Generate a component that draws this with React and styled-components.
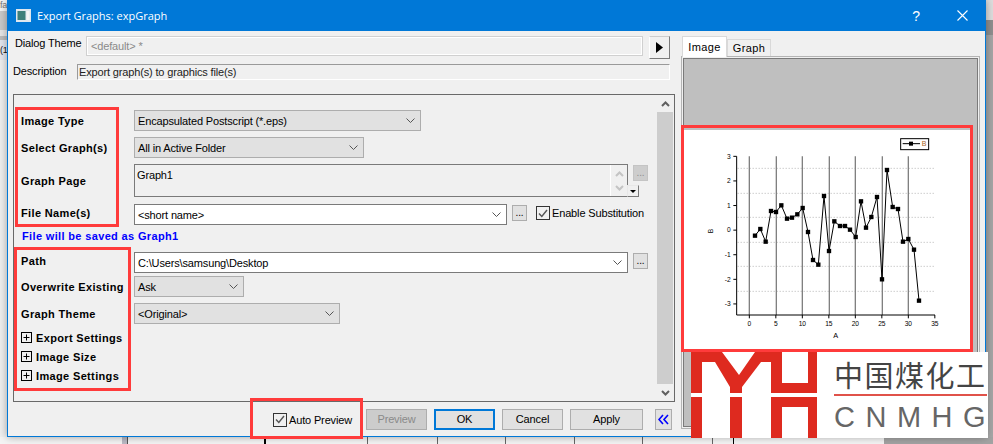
import React from "react";
import styled, { createGlobalStyle } from "styled-components";

const data = [
  [195, 320], [211, 300], [227, 338], [243, 246], [258, 249], [274, 229], [291, 269], [306, 266],
  [322, 256], [338, 237], [354, 309], [369, 393], [385, 407], [402, 201], [417, 366], [433, 277],
  [450, 291], [465, 291], [480, 302], [497, 324], [513, 217], [528, 296], [544, 264], [561, 204],
  [576, 451], [591, 123], [608, 234], [624, 240], [639, 338], [655, 330], [672, 362], [687, 515],
];

// what shows of the table behind the dialog: [gap before, colour, width]
const behind = [
  [122, "#b9b9c4", 5], [0, "#555", 1], [136, "#000", 2], [101, "#666", 1], [69, "#666", 1], [67, "#666", 1],
  [68, "#666", 1], [67, "#666", 1], [69, "#666", 1], [20, "#000", 1],
];

const GlobalStyle = createGlobalStyle`
  html, body {
    margin: 0;
    padding: 0;
    background: #f0f0f0;
  }
  body {
    font-family: "Liberation Sans", Arial, sans-serif;
    font-size: 11px;
    letter-spacing: -0.15px;
    color: #000;
  }
`;

const Desktop = styled.div`
  position: relative;
  width: 993px;
  height: 444px;
  overflow: hidden;
  background: #efefef;
`;

const LeftScrap = styled.div`
  position: absolute;
  left: 0;
  top: 0;
  width: 8px;
  height: 60px;
  background: linear-gradient(#f4f4f4 0 11px, #c9c9c9 11px 30px, #e6e6e6 30px 36px, #bcbcbc 36px 40px, #e4e6ee 40px);
  font-size: 9px;
  line-height: 10px;
  overflow: hidden;
`;

const ScrapText = styled.div`
  margin-top: ${({ $top }) => $top}px;
  white-space: nowrap;
  color: ${({ $dark }) => ($dark ? "#111" : "#777")};
`;

const RightScrap = styled.div`
  position: absolute;
  right: 0;
  top: 0;
  width: 8px;
  height: 444px;
  background: linear-gradient(#dddddd 0 20px, #8f8f8f 20px 35px, #a6a6a6 35px);
`;

const Dialog = styled.div`
  position: absolute;
  left: 7px;
  top: 0;
  width: 979px;
  height: 437px;
  box-sizing: border-box;
  background: #f0f0f0;
  border: 1px solid #0078d7;
  border-top: 0;
  box-shadow: 0 0 8px rgba(0, 0, 0, 0.35);
  display: flex;
  flex-direction: column;
`;

const TitleBar = styled.div`
  height: 31px;
  flex: none;
  background: #0078d7;
  color: #fff;
  display: flex;
  align-items: center;
  padding-left: 8px;
  font-size: 12px;
`;

const TitleText = styled.span`
  margin: 0 -1px 0 6px;
  flex: 1;
  font-family: "Open Sans", sans-serif;
  font-size: 11px;
  letter-spacing: 0;
`;

const TitleBtn = styled.span`
  width: 46px;
  text-align: center;
  font-size: 14px;
  display: flex;
  justify-content: center;
`;

const Body = styled.div`
  flex: 1;
  display: flex;
`;

const LeftColumn = styled.div`
  width: 668px;
  padding-left: 5px;
  display: flex;
  flex-direction: column;
`;

const ThemeRow = styled.div`
  display: flex;
  align-items: flex-start;
  margin-top: 5px;
  height: 28px;
`;

const DescRow = styled.div`
  display: flex;
  align-items: flex-start;
  height: 17px;
`;

const FieldLabel = styled.span`
  width: ${({ $w }) => $w}px;
  flex: none;
  padding-left: ${({ $pad }) => $pad || 0}px;
  box-sizing: border-box;
  line-height: 15px;
`;

const ThemeBox = styled.div`
  width: 557px;
  height: 20px;
  box-sizing: border-box;
  border: 1px solid #d0d0d0;
  outline: 1px solid #fff;
  outline-offset: -2px;
  color: #8a8a8a;
  line-height: 19px;
  padding-left: 4px;
`;

const ArrowBtn = styled.div`
  width: 21px;
  height: 23px;
  margin-left: 6px;
  box-sizing: border-box;
  background: #f0f0f0;
  border: 1px solid;
  border-color: #ccc #7a7a7a #7a7a7a #fff;
  display: flex;
  align-items: center;
  justify-content: center;
`;

const DescBox = styled.div`
  width: 593px;
  height: 16px;
  margin-left: -1px;
  box-sizing: border-box;
  border: 1px solid;
  border-color: #9a9a9a #fff #fff #9a9a9a;
  line-height: 14px;
  padding-left: 1px;
  color: #222;
`;

const Panel = styled.div`
  margin-top: 13px;
  width: 662px;
  height: 308px;
  box-sizing: border-box;
  border: 1px solid #696969;
  display: flex;
`;

const PanelContent = styled.div`
  flex: 1;
  padding: 15px 0 0 7px;
  display: flex;
  flex-direction: column;
`;

const Row = styled.div`
  display: flex;
  align-items: center;
  height: ${({ $h }) => $h || 21}px;
  margin-bottom: ${({ $gap }) => $gap || 0}px;
`;

const Label = styled.span`
  width: 113px;
  flex: none;
  font-weight: 700;
  font-size: 11px;
  letter-spacing: 0.35px;
  margin-bottom: ${({ $raised }) => ($raised ? 3 : 0)}px;
`;

const Combo = styled.div`
  width: ${({ $w }) => $w}px;
  height: 100%;
  box-sizing: border-box;
  background: ${({ $white }) => ($white ? "#fff" : "#e1e1e1")};
  border: 1px solid ${({ $white }) => ($white ? "#7a7a7a" : "#adadad")};
  display: flex;
  align-items: center;
  justify-content: space-between;
  padding: 0 5px 0 3px;
`;

const Chevron = styled.svg`
  width: 9px;
  height: 5px;
  flex: none;
`;

const PageBox = styled.div`
  position: relative;
  width: 494px;
  height: 100%;
  box-sizing: border-box;
  border: 1px solid #7a7a7a;
  padding: 4px 2px;
`;

const PageScroll = styled.div`
  position: absolute;
  right: 0;
  top: 0;
  bottom: 0;
  width: 17px;
  border-left: 1px solid #fff;
  display: flex;
  flex-direction: column;
  justify-content: space-between;
  align-items: center;
  padding: 6px 0 5px;
  box-sizing: border-box;
`;

const DropMini = styled.div`
  position: absolute;
  right: -12px;
  bottom: -1px;
  width: 12px;
  height: 12px;
  box-sizing: border-box;
  background: #f0f0f0;
  border: 1px solid;
  border-color: #e8e8e8 #7a7a7a #7a7a7a #e8e8e8;
  display: flex;
  align-items: center;
  justify-content: center;
`;

const DotsBtn = styled.div`
  width: 15px;
  height: 16px;
  margin-left: 5px;
  align-self: flex-start;
  margin-top: 1px;
  box-sizing: border-box;
  background: ${({ $off }) => ($off ? "#cdcdcd" : "#e1e1e1")};
  border: 1px solid ${({ $off }) => ($off ? "#c4c4c4" : "#adadad")};
  color: ${({ $off }) => ($off ? "#8f8f8f" : "#000")};
  text-align: center;
  line-height: 14px;
  font-size: 10px;
`;

const Check = styled.div`
  width: 14px;
  height: 14px;
  flex: none;
  box-sizing: border-box;
  border: 1px solid #333;
  background: #f0f0f0;
  display: flex;
  align-items: center;
  justify-content: center;
`;

const CheckLabel = styled.span`
  margin-left: 2px;
`;

const SubstWrap = styled.div`
  display: flex;
  align-items: center;
  margin-left: 9px;
  margin-bottom: 3px;
`;

const Notice = styled.div`
  height: 21px;
  margin: 1px 0 5px 1px;
  line-height: 21px;
  color: #0000ff;
  font-weight: 700;
  letter-spacing: 0.35px;
`;

const TreeRow = styled.div`
  display: flex;
  align-items: center;
  height: 19px;
  font-weight: 700;
  letter-spacing: 0.35px;
`;

const Plus = styled.svg`
  width: 11px;
  height: 11px;
  margin: 0 4px 0 0;
  flex: none;
`;

const ScrollBar = styled.div`
  width: 16px;
  margin-right: 1px;
  display: flex;
  flex-direction: column;
  background: #f0f0f0;
`;

const ScrollEnd = styled.div`
  height: 17px;
  display: flex;
  align-items: center;
  justify-content: center;
`;

const Thumb = styled.div`
  flex: 1;
  background: #cdcdcd;
`;

const Footer = styled.div`
  display: flex;
  align-items: center;
  height: 21px;
  margin-top: 7px;
  padding-left: 260px;
`;

const AutoWrap = styled.div`
  display: flex;
  align-items: center;
  width: 93px;
`;

const Btn = styled.div`
  width: ${({ $w }) => $w || 61}px;
  height: 21px;
  margin-right: 7px;
  box-sizing: border-box;
  text-align: center;
  background: ${({ $off }) => ($off ? "#cccccc" : "#e1e1e1")};
  border: ${({ $primary }) => ($primary ? "2px solid #0078d7" : "1px solid #adadad")};
  color: ${({ $off }) => ($off ? "#8a8a8a" : "#000")};
  line-height: ${({ $primary }) => ($primary ? 17 : 19)}px;
`;

const CollapseBtn = styled.div`
  width: 17px;
  height: 21px;
  margin-left: 5px;
  box-sizing: border-box;
  border: 1px solid #adadad;
  display: flex;
  align-items: center;
  justify-content: center;
  background: #e1e1e1;
`;

const RightColumn = styled.div`
  flex: 1;
  padding-top: 5px;
  display: flex;
  flex-direction: column;
`;

const Tabs = styled.div`
  display: flex;
  align-items: flex-end;
  height: 21px;
  margin-left: 1px;
  position: relative;
  z-index: 1;
`;

const Tab = styled.div`
  height: ${({ $active }) => ($active ? 21 : 17)}px;
  width: ${({ $w }) => $w}px;
  box-sizing: border-box;
  background: ${({ $active }) => ($active ? "#fff" : "#f0f0f0")};
  border: 1px solid #d9d9d9;
  border-bottom: 0;
  text-align: center;
  line-height: ${({ $active }) => ($active ? 20 : 16)}px;
  letter-spacing: 0.4px;
  margin-bottom: ${({ $active }) => ($active ? 0 : 1)}px;
`;

const PreviewFrame = styled.div`
  width: 299px;
  height: 373px;
  margin-top: -1px;
  box-sizing: border-box;
  border: 1px solid #b4b4b4;
  padding: 1px;
`;

const PreviewInner = styled.div`
  height: 100%;
  box-sizing: border-box;
  border: 1px solid #7a7a7a;
  background: #bfbfbf;
  padding-top: 71px;
  padding-right: 4px;
`;

const Paper = styled.div`
  height: 220px;
  background: #fff;
`;

const Mark = styled.div`
  position: absolute;
  left: ${({ $x }) => $x}px;
  top: ${({ $y }) => $y}px;
  width: ${({ $w }) => $w}px;
  height: ${({ $h }) => $h}px;
  box-sizing: border-box;
  border: 3px solid #ff3b3b;
  pointer-events: none;
`;

const Logo = styled.div`
  position: absolute;
  left: 691px;
  top: 352px;
  width: 297px;
  height: 86px;
  background: #fff;
  display: flex;
`;

const LogoText = styled.div`
  margin-left: 15px;
  padding-top: 5px;
  width: 153px;
`;

const LogoCn = styled.div`
  font-family: "Noto Sans CJK SC", sans-serif;
  font-size: 29px;
  line-height: 34px;
  letter-spacing: 1.5px;
  color: #444;
  white-space: nowrap;
  border-bottom: 2px solid #e0524a;
  padding-bottom: 3px;
`;

const LogoEn = styled.div`
  font-family: "Liberation Sans", sans-serif;
  font-size: 29px;
  line-height: 30px;
  margin-top: 6px;
  letter-spacing: 0;
  color: #666;
  white-space: nowrap;
`;

const LogoSpaced = styled.span`
  letter-spacing: 10.5px;
`;

const Strip = styled.div`
  position: absolute;
  left: 0;
  right: 0;
  top: 437px;
  height: 7px;
  background: #f4f4f4;
  display: flex;
`;

const StripLine = styled.div`
  width: ${({ $w }) => $w}px;
  margin-left: ${({ $gap }) => $gap}px;
  background: ${({ $color }) => $color};
  flex: none;
`;

const StripEnd = styled.div`
  flex: 1;
  margin-left: 150px;
  background: #a3a3a3;
`;

const chevron = (
  <Chevron viewBox="0 0 9 5">
    <path d="M0.5 0.5 L4.5 4.5 L8.5 0.5" fill="none" stroke="#555" strokeWidth="1" />
  </Chevron>
);

const plus = (
  <Plus viewBox="0 0 11 11">
    <rect x="0.5" y="0.5" width="10" height="10" fill="none" stroke="#000" />
    <path d="M2.5 5.5 H8.5 M5.5 2.5 V8.5" stroke="#000" />
  </Plus>
);

const tick = (
  <svg width="10" height="9" viewBox="0 0 10 9">
    <path d="M1 4.5 L3.8 7.5 L9 1" fill="none" stroke="#555" strokeWidth="1.4" />
  </svg>
);

const Chart = () => {
  const grid = [118, 193, 265, 340, 412, 487];
  const vlines = [178, 259, 337, 418, 496, 577, 655];
  const xTicks = [0, 5, 10, 15, 20, 25, 30, 35];
  const yTicks = [3, 2, 1, 0, -1, -2, -3];
  return (
    <svg width="288" height="220" viewBox="0 0 864 660">
      <g transform="translate(18 -3)" fontFamily="Liberation Sans" fontSize="20">
        {grid.map((y) => (
          <line key={y} x1="143" x2="733" y1={y} y2={y} stroke="#b4b4b4" strokeWidth="3" strokeDasharray="3 6" />
        ))}
        {vlines.map((x) => (
          <line key={x} x1={x} x2={x} y1="82" y2="558" stroke="#808080" strokeWidth="4" />
        ))}
        <path d="M140 82 V558 H735" fill="none" stroke="#000" strokeWidth="3" />
        {xTicks.map((t, i) => {
          const x = 178 + i * 79.5;
          return (
            <g key={t}>
              <line x1={x} x2={x} y1="558" y2="568" stroke="#000" strokeWidth="3" />
              <text x={x} y="591" textAnchor="middle">{t}</text>
            </g>
          );
        })}
        {yTicks.map((t, i) => {
          const y = 82 + i * 73.8;
          return (
            <g key={t}>
              <line x1="130" x2="140" y1={y} y2={y} stroke="#000" strokeWidth="3" />
              <text x="122" y={y + 7} textAnchor="end">{t}</text>
            </g>
          );
        })}
        <text x="437" y="627" fontSize="22" textAnchor="middle">A</text>
        <text x="70" y="306" textAnchor="middle" transform="rotate(-90 70 306)">B</text>
        <polyline points={data.map((p) => p.join(",")).join(" ")} fill="none" stroke="#000" strokeWidth="3" />
        {data.map(([x, y]) => (
          <rect key={x} x={x - 6.5} y={y - 6.5} width="13" height="13" fill="#000" />
        ))}
        <rect x="632" y="29" width="84" height="33" fill="#fff" stroke="#000" strokeWidth="3" />
        <path d="M638 44 H690" stroke="#000" strokeWidth="3" />
        <rect x="657" y="38" width="12" height="12" fill="#000" />
        <text x="695" y="52" fontSize="21" fill="#a8641f">B</text>
      </g>
    </svg>
  );
};

const App = () => (
  <Desktop>
    <GlobalStyle />
    <LeftScrap>
      <ScrapText $top={0}>fa</ScrapText>
      <ScrapText $top={35} $dark>(1</ScrapText>
    </LeftScrap>
    <RightScrap />
    <Strip>
      {behind.map(([gap, color, w], i) => (
        <StripLine key={i} $gap={gap} $color={color} $w={w} />
      ))}
      <StripEnd />
    </Strip>
    <Dialog>
      <TitleBar>
        <svg width="15" height="13" viewBox="0 0 15 13">
          <rect x="0" y="0" width="15" height="13" fill="#dfe7ee" />
          <rect x="1.5" y="2" width="8" height="9" fill="#3d7f7a" />
          <rect x="10.5" y="2" width="3" height="9" fill="#f4f4f4" />
        </svg>
        <TitleText>Export Graphs: expGraph</TitleText>
        <TitleBtn>?</TitleBtn>
        <TitleBtn>
          <svg width="11" height="11" viewBox="0 0 11 11">
            <path d="M0.5 0.5 L10.5 10.5 M10.5 0.5 L0.5 10.5" stroke="#fff" strokeWidth="1.1" />
          </svg>
        </TitleBtn>
      </TitleBar>
      <Body>
        <LeftColumn>
          <ThemeRow>
            <FieldLabel $w={73} $pad={2}>Dialog Theme</FieldLabel>
            <ThemeBox>&lt;default&gt; *</ThemeBox>
            <ArrowBtn>
              <svg width="7" height="11" viewBox="0 0 7 11">
                <path d="M0 0 L7 5.5 L0 11 Z" fill="#000" />
              </svg>
            </ArrowBtn>
          </ThemeRow>
          <DescRow>
            <FieldLabel $w={65}>Description</FieldLabel>
            <DescBox>Export graph(s) to graphics file(s)</DescBox>
          </DescRow>
          <Panel>
            <PanelContent>
              <Row $gap={6}>
                <Label>Image Type</Label>
                <Combo $w={287}>Encapsulated Postscript (*.eps){chevron}</Combo>
              </Row>
              <Row $gap={6}>
                <Label>Select Graph(s)</Label>
                <Combo $w={230}>All in Active Folder{chevron}</Combo>
              </Row>
              <Row $h={33} $gap={7}>
                <Label>Graph Page</Label>
                <PageBox>
                  Graph1
                  <PageScroll>
                    <svg width="9" height="6" viewBox="0 0 9 6">
                      <path d="M1 5 L4.5 1.5 L8 5" fill="none" stroke="#c4c4c4" strokeWidth="2" />
                    </svg>
                    <svg width="9" height="6" viewBox="0 0 9 6">
                      <path d="M1 1 L4.5 4.5 L8 1" fill="none" stroke="#c4c4c4" strokeWidth="2" />
                    </svg>
                  </PageScroll>
                  <DropMini>
                    <svg width="6" height="3" viewBox="0 0 6 3">
                      <path d="M0 0 H6 L3 3 Z" fill="#000" />
                    </svg>
                  </DropMini>
                </PageBox>
                <DotsBtn $off>...</DotsBtn>
              </Row>
              <Row>
                <Label $raised>File Name(s)</Label>
                <Combo $w={373} $white>&lt;short name&gt;{chevron}</Combo>
                <DotsBtn>...</DotsBtn>
                <SubstWrap>
                  <Check>{tick}</Check>
                  <CheckLabel>Enable Substitution</CheckLabel>
                </SubstWrap>
              </Row>
              <Notice>File will be saved as Graph1</Notice>
              <Row $gap={3}>
                <Label $raised>Path</Label>
                <Combo $w={494} $white>C:\Users\samsung\Desktop{chevron}</Combo>
                <DotsBtn>...</DotsBtn>
              </Row>
              <Row $gap={6}>
                <Label>Overwrite Existing</Label>
                <Combo $w={110}>Ask{chevron}</Combo>
              </Row>
              <Row $gap={4}>
                <Label>Graph Theme</Label>
                <Combo $w={206}>&lt;Original&gt;{chevron}</Combo>
              </Row>
              <TreeRow>{plus}Export Settings</TreeRow>
              <TreeRow>{plus}Image Size</TreeRow>
              <TreeRow>{plus}Image Settings</TreeRow>
            </PanelContent>
            <ScrollBar>
              <ScrollEnd>
                <svg width="9" height="6" viewBox="0 0 9 6">
                  <path d="M1 5 L4.5 1.5 L8 5" fill="none" stroke="#606060" strokeWidth="2" />
                </svg>
              </ScrollEnd>
              <Thumb />
              <ScrollEnd>
                <svg width="9" height="6" viewBox="0 0 9 6">
                  <path d="M1 1 L4.5 4.5 L8 1" fill="none" stroke="#606060" strokeWidth="2" />
                </svg>
              </ScrollEnd>
            </ScrollBar>
          </Panel>
          <Footer>
            <AutoWrap>
              <Check>{tick}</Check>
              <CheckLabel>Auto Preview</CheckLabel>
            </AutoWrap>
            <Btn $off>Preview</Btn>
            <Btn $primary>OK</Btn>
            <Btn>Cancel</Btn>
            <Btn $w={73}>Apply</Btn>
            <CollapseBtn>
              <svg width="11" height="11" viewBox="0 0 11 11">
                <path d="M5 1 L1 5.5 L5 10 M10 1 L6 5.5 L10 10" fill="none" stroke="#0000ff" strokeWidth="1.6" />
              </svg>
            </CollapseBtn>
          </Footer>
        </LeftColumn>
        <RightColumn>
          <Tabs>
            <Tab $active $w={45}>Image</Tab>
            <Tab $w={44}>Graph</Tab>
          </Tabs>
          <PreviewFrame>
            <PreviewInner>
              <Paper>
                <Chart />
              </Paper>
            </PreviewInner>
          </PreviewFrame>
        </RightColumn>
      </Body>
    </Dialog>

    <Mark $x={15} $y={107} $w={104} $h={120} />
    <Mark $x={14} $y={247} $w={117} $h={144} />
    <Mark $x={250} $y={398} $w={113} $h={41} />
    <Mark $x={681} $y={125} $w={292} $h={227} />

    <Logo>
      <svg width="128" height="86" viewBox="0 0 128 86">
        <path d="M0 0 H31 L48 23 L64 0 H91 V41 H80 V10 H70 L51 35 V41 H39 V35 L24 10 H11 V41 H0 Z" fill="#de2a1f" />
        <path d="M91 31 H117 V0 H126 V41 H91 Z" fill="#de2a1f" />
        <path d="M0 45 H11 V86 H0 Z M39 45 H51 V86 H39 Z" fill="#de2a1f" />
        <path d="M80 45 H126 V86 H117 V55 H91 V86 H80 Z" fill="#de2a1f" />
      </svg>
      <LogoText>
        <LogoCn>中国煤化工</LogoCn>
        <LogoEn><LogoSpaced>CNMH</LogoSpaced>G</LogoEn>
      </LogoText>
    </Logo>
  </Desktop>
);

export default App;
